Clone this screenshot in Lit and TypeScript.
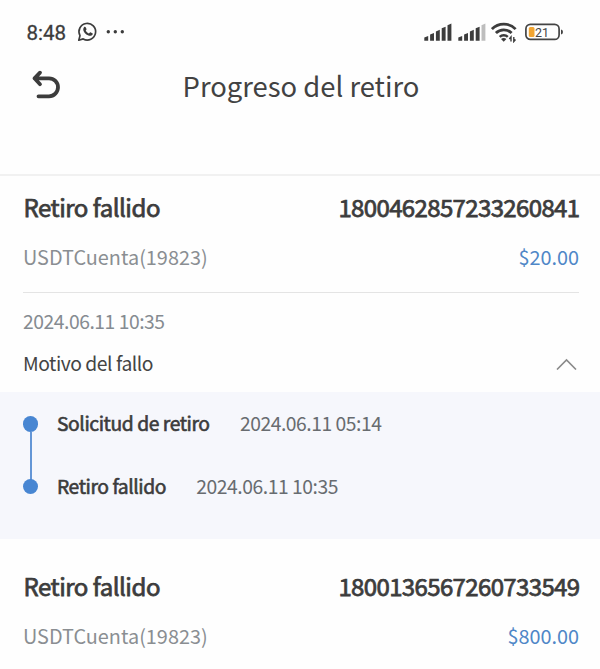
import { LitElement, html, css, svg } from "lit";
import { customElement, property } from "lit/decorators.js";

interface Step { label: string; time: string; }

@customElement("status-bar")
class StatusBar extends LitElement {
  static styles = css`
    :host { display: flex; height: 64px; box-sizing: border-box; padding: 0 36px 0 26.5px; align-items: center; justify-content: space-between; }
    .group { display: flex; align-items: center; }
    .time { font: 400 20.5px/24px Roboto, "Noto Sans", sans-serif; color: #3c3c3c; -webkit-text-stroke: .3px #3c3c3c; width: 50px; padding-top: 2px; }
    svg { display: block; }
    .level { font: 400 13.5px Roboto, sans-serif; fill: #444; }
  `;
  render() {
    const bars = (weak: boolean) => [0, 1, 2, 3, 4].map((i) => {
      const x = 0.3 + i * 5.8, top = 13.2 - i * 3.1;
      return svg`<path d=${`M${x} ${top + 1.4} l3.900 -1.600 V17.800 H${x}z`}
        fill=${weak && i === 4 ? "#bdbdbd" : "#3c3c3c"} />`;
    });
    return html`
      <div class="group">
        <span class="time">8:48</span>
        <svg width="50" height="22" viewBox="0 0 50 22">
          <path d="M1.8 19.2 L3 14.6 A8.3 8.3 0 1 1 6.2 17.9 Z" fill="none" stroke="#3c3c3c" stroke-width="1.7" stroke-linejoin="round" />
          <path d="M7 6.2 c.6-.7 1.4-.6 1.8.2 l.7 1.6 c.2.5-.5 1-.8 1.5 c.7 1.4 1.8 2.4 3.2 3 l1-1.1 c.3-.3.6-.2 1 0 l1.5.8 c.5.3.4.8.2 1.3 c-.9 1.7-3 1.6-4.7.8 c-2.3-1.1-3.9-2.9-4.5-4.9 c-.3-1.2-.1-2.3.6-3.2z" fill="#3c3c3c" />
          <circle cx="31.300" cy="10.800" r="1.700" fill="#3c3c3c" />
          <circle cx="38.300" cy="10.800" r="1.700" fill="#3c3c3c" />
          <circle cx="45.300" cy="10.800" r="1.700" fill="#3c3c3c" />
        </svg>
      </div>
      <div class="group">
        <svg width="33.500" height="18" viewBox="0 0 33.500 18">${bars(false)}</svg>
        <svg width="33.500" height="18" viewBox="0 0 33.500 18">${bars(true)}</svg>
        <svg width="34" height="22" viewBox="0 0 34 22">
          <g fill="none" stroke="#3c3c3c" stroke-width="2.800">
            <path d="M.9 8.100 A16.500 16.500 0 0 1 24.600 8.100" />
            <path d="M4.900 12.100 A11 11 0 0 1 20.600 12.100" />
            <path d="M8.700 15.900 A5.800 5.800 0 0 1 16.800 15.900" stroke-width="2.400" />
          </g>
          <path d="M10 18 Q12.700 16 15.400 18 L12.700 20.800Z" fill="#3c3c3c" />
          <path d="M20 20.500 v-4.500 l-1.700 2 M22.800 16 v4.500 l1.700-2" fill="none" stroke="#3c3c3c" stroke-width="1.400" />
        </svg>
        <svg width="39" height="18" viewBox="0 0 39 18">
          <rect x=".9" y="1.400" width="33.200" height="15" rx="4.500" fill="none" stroke="#444" stroke-width="1.700" />
          <rect x="3.800" y="3.900" width="5.700" height="10" rx="1.500" fill="#f2a531" />
          <text class="level" x="10" y="13.800" textLength="14" lengthAdjust="spacingAndGlyphs">21</text>
          <path d="M36 6.500 q2 .2 2 2.500 t-2 2.500z" fill="#444" />
        </svg>
      </div>`;
  }
}

@customElement("withdrawal-card")
class WithdrawalCard extends LitElement {
  @property() number = "";
  @property() amount = "";
  static styles = css`
    :host { display: block; padding: 0 21px 0 23px; }
    .row { display: flex; justify-content: space-between; }
    .head { font-size: 24px; line-height: 34px; padding-left: .5px; color: #3c3c3c; -webkit-text-stroke: .75px #3c3c3c; }
    .name { letter-spacing: -.47px; }
    .number { letter-spacing: -.63px; margin-right: -.5px; }
    .sub { font-size: 19.85px; line-height: 30px; margin-top: 17.5px; color: #8a8e92; }
    .amount { color: #4f87c7; }
  `;
  render() {
    return html`
      <div class="row head"><span class="name">Retiro fallido</span><span class="number">${this.number}</span></div>
      <div class="row sub"><span>USDTCuenta(19823)</span><span class="amount">${this.amount}</span></div>`;
  }
}

@customElement("progress-steps")
class ProgressSteps extends LitElement {
  @property({ attribute: false }) steps: Step[] = [];
  static styles = css`
    :host { display: block; box-sizing: border-box; height: 146.5px; padding: 16px 23px; background: #f6f7fc; }
    .step { display: flex; height: 62.5px; }
    .rail { display: flex; flex-direction: column; align-items: center; width: 15px; margin-right: 19px; padding-top: 8.2px; box-sizing: border-box; }
    .dot { width: 15.4px; height: 15.4px; flex: none; border-radius: 50%; background: #4886d2; }
    .line { width: 2px; height: 48px; flex: none; background: #6496d6; }
    .label, .date { font-size: 19.3px; line-height: 30px; }
    .label { letter-spacing: -.42px; color: #3c3c3c; -webkit-text-stroke: .6px #3c3c3c; margin-right: 30.3px; }
    .date { letter-spacing: -.45px; color: #686c70; }
  `;
  render() {
    return this.steps.map((s, i) => html`
      <div class="step">
        <div class="rail"><i class="dot"></i>${i < this.steps.length - 1 ? html`<i class="line"></i>` : ""}</div>
        <span class="label">${s.label}</span><span class="date">${s.time}</span>
      </div>`);
  }
}

@customElement("app-root")
class AppRoot extends LitElement {
  static styles = css`
    :host { display: block; height: 669px; overflow: hidden; background: #fefefe; font-family: "Noto Sans CJK SC", "Noto Sans", sans-serif; }
    .nav { display: grid; grid-template-columns: 100px 1fr 98px; height: 110px; border-bottom: 2px solid #f1f1f1; align-items: start; }
    .back { margin: 5px 0 0 31px; display: block; }
    .title { margin: -1px 0 0; text-align: center; font-weight: 400; font-size: 27.4px; line-height: 44px; color: #424242; }
    .first { margin-top: 14px; }
    .details { margin: 20.5px 21px 0 23px; border-top: 1px solid #e4e4e4; height: 100px; box-sizing: border-box; padding-top: 13px; }
    .date, .reason { font-size: 19.3px; letter-spacing: -.45px; line-height: 30px; }
    .date { color: #858b91; }
    .reason { display: flex; justify-content: space-between; align-items: center; margin-top: 12px; color: #444; }
    .second { margin-top: 30.5px; }
  `;
  steps: Step[] = [
    { label: "Solicitud de retiro", time: "2024.06.11 05:14" },
    { label: "Retiro fallido", time: "2024.06.11 10:35" },
  ];
  render() {
    return html`
      <status-bar></status-bar>
      <header class="nav">
        <svg class="back" width="32" height="32" viewBox="0 0 32 32" fill="none" stroke="#3c3c3c" stroke-width="3.800" stroke-linecap="round" stroke-linejoin="round">
          <path d="M9 3.700 L3.500 9.300 L9 15.200 M3.500 9.300 H18 A9 9 0 0 1 18 27.300 H7.500" />
        </svg>
        <h1 class="title">Progreso del retiro</h1>
      </header>
      <withdrawal-card class="first" number="1800462857233260841" amount="$20.00"></withdrawal-card>
      <section class="details">
        <div class="date">2024.06.11 10:35</div>
        <div class="reason"><span>Motivo del fallo</span>
          <svg width="24" height="14" viewBox="0 0 24 14"><path d="M2 13.500 L11.500 4 L21 13.500" fill="none" stroke="#8a8a8a" stroke-width="1.600" /></svg>
        </div>
      </section>
      <progress-steps .steps=${this.steps}></progress-steps>
      <withdrawal-card class="second" number="1800136567260733549" amount="$800.00"></withdrawal-card>`;
  }
}
